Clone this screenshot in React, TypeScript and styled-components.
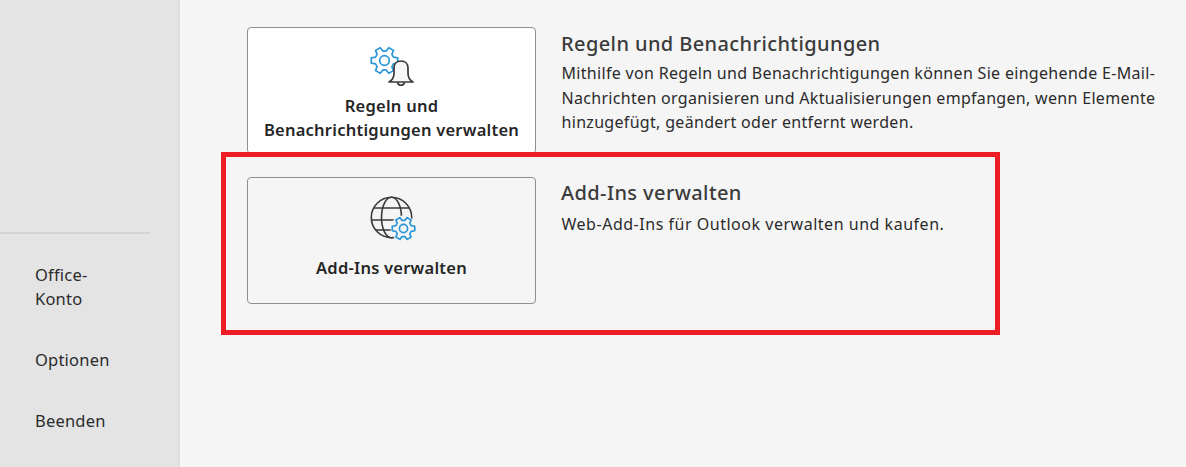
import React from "react";
import styled, { createGlobalStyle } from "styled-components";

const Global = createGlobalStyle`
  html, body { margin: 0; padding: 0; background: #f5f5f5; }
  body { font-family: "Noto Sans", "Open Sans", "Liberation Sans", sans-serif; }
`;
const Page = styled.div`
  position: relative;
  display: flex;
  width: 1186px;
  height: 467px;
  overflow: hidden;
  background: #f5f5f5;
  color: #262626;
`;
const Sidebar = styled.nav`
  flex: 0 0 178px;
  box-sizing: content-box;
  background: #e4e4e4;
  border-right: 2px solid #dedede;
  padding-top: 232px;
`;
const Divider = styled.div`
  width: 150px;
  height: 2px;
  background: #d3d3d3;
  margin-bottom: 29px;
`;
const NavItem = styled.div`
  width: 80px;
  margin: 0 0 37px 35px;
  font-size: 16.5px;
  line-height: 24px;
  letter-spacing: 0.2px;
  color: #2b2b2b;
`;
const Main = styled.main`
  flex: 1;
  padding: 27px 0 0 67px;
  display: flex;
  flex-direction: column;
  gap: 23px;
`;
const Row = styled.section`
  display: flex;
  gap: 26px;
`;
const Card = styled.div<{ $white?: boolean }>`
  box-sizing: border-box;
  flex: 0 0 289px;
  height: 127px;
  border: 1px solid #8f8f8f;
  border-radius: 4px;
  background: ${p => (p.$white ? "#ffffff" : "#f5f5f5")};
  display: flex;
  flex-direction: column;
  align-items: center;
  padding: 15px 0 6px;
  text-align: center;
`;
const IconBox = styled.svg`
  display: block;
  flex: none;
  overflow: visible;
`;
const CardLabel = styled.div`
  flex: 1;
  display: flex;
  align-items: center;
  font-size: 16.5px;
  font-weight: 600;
  line-height: 24.5px;
  letter-spacing: 0.24px;
  color: #262626;
  white-space: nowrap;
`;
const Body = styled.div<{ $short?: boolean }>`
  padding-top: ${p => (p.$short ? 1 : 2)}px;
`;
const Title = styled.h2<{ $short?: boolean }>`
  margin: 0 0 ${p => (p.$short ? 4 : 2)}px -1px;
  font-size: 20px;
  line-height: 30px;
  font-weight: 500;
  letter-spacing: 0.4px;
  color: #3b3b3b;
  white-space: nowrap;
`;
const Desc = styled.p<{ $short?: boolean }>`
  margin: 0 0 0 -0.5px;
  width: 620px;
  font-size: 16px;
  line-height: 24.5px;
  letter-spacing: ${p => (p.$short ? 0.52 : 0.31)}px;
  color: #2b2b2b;
  white-space: pre-line;
`;
const Highlight = styled.div`
  position: absolute;
  left: 221px;
  top: 152px;
  width: 779px;
  height: 183px;
  box-sizing: border-box;
  border: 5px solid #ee1c25;
  pointer-events: none;
`;

const gearPath = (() => {
  const R = 13.5;
  const r = 9.6;
  const pts: string[] = [];
  for (let k = 0; k < 6; k++) {
    const a = (k * 60 * Math.PI) / 180;
    const p = (rad: number, d: number) =>
      `${(rad * Math.cos(a + d)).toFixed(2)} ${(rad * Math.sin(a + d)).toFixed(2)}`;
    pts.push(p(r, -0.36), p(R, -0.2), p(R, 0.2), p(r, 0.36));
  }
  return "M" + pts.join(" L") + " Z";
})();

const Gear = ({ x, y, s = 1 }: { x: number; y: number; s?: number }) => (
  <g transform={`translate(${x} ${y}) scale(${s})`} stroke="#2b95d9" strokeWidth={1.7 / s} fill="none" strokeLinejoin="round">
    <path d={gearPath} />
    <circle cx="0" cy="0" r="4.8" />
  </g>
);

const RulesIcon = () => (
  <IconBox width="46" height="46" viewBox="0 0 46 46">
    <Gear x={15.5} y={17.5} />
    <path
      d="M20 39 C23 37.5 25 35 25 30 L25 25 C25 20.5 28 18 32 18 C36 18 39 20.5 39 25 L39 30 C39 35 41 37.5 44 39 Z"
      fill="#f7f7f7"
      stroke="#3a3a3a"
      strokeWidth="1.7"
      strokeLinejoin="round"
    />
    <path d="M28.5 39.5 A3.6 3.6 0 0 0 35.5 39.5" fill="none" stroke="#3a3a3a" strokeWidth="1.7" />
  </IconBox>
);

const GlobeIcon = () => (
  <IconBox width="46" height="46" viewBox="0 0 46 46">
    <g fill="none" stroke="#3a3a3a" strokeWidth="1.6">
      <circle cx="22.5" cy="24.5" r="20.2" />
      <ellipse cx="22.5" cy="24.5" rx="10" ry="20.2" />
      <path d="M2.3 27 H42.7 M4.5 15 H40.5 M6 37 H39" />
    </g>
    <circle cx="34.5" cy="35.5" r="13" fill="#f5f5f5" />
    <Gear x={34.5} y={35.5} s={0.85} />
  </IconBox>
);

export default function App() {
  return (
    <Page>
      <Global />
      <Sidebar>
        <Divider />
        <NavItem>Office-Konto</NavItem>
        <NavItem>Optionen</NavItem>
        <NavItem>Beenden</NavItem>
      </Sidebar>
      <Main>
        <Row>
          <Card $white>
            <RulesIcon />
            <CardLabel>
              Regeln und
              <br />
              Benachrichtigungen verwalten
            </CardLabel>
          </Card>
          <Body>
            <Title>Regeln und Benachrichtigungen</Title>
            <Desc>{"Mithilfe von Regeln und Benachrichtigungen können Sie eingehende E-Mail-\nNachrichten organisieren und Aktualisierungen empfangen, wenn Elemente\nhinzugefügt, geändert oder entfernt werden."}</Desc>
          </Body>
        </Row>
        <Row>
          <Card>
            <GlobeIcon />
            <CardLabel>Add-Ins verwalten</CardLabel>
          </Card>
          <Body $short>
            <Title $short>Add-Ins verwalten</Title>
            <Desc $short>Web-Add-Ins für Outlook verwalten und kaufen.</Desc>
          </Body>
        </Row>
      </Main>
      <Highlight />
    </Page>
  );
}
